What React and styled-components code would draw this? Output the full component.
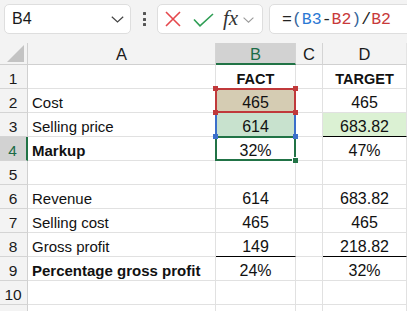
import React from 'react';
import styled, { createGlobalStyle } from 'styled-components';

const GlobalStyle = createGlobalStyle`
  html, body {
    margin: 0;
    padding: 0;
    overflow: hidden;
    background: #f3f3f3;
  }
  * { box-sizing: border-box; }
`;

const GRID = '#e1e1e1';
const GREEN = '#217346';

const rows = [
  { n: 1, a: '', b: 'FACT', d: 'TARGET', head: true },
  { n: 2, a: 'Cost', b: '465', d: '465', bBg: '#d5ccb3', range: 'red' },
  { n: 3, a: 'Selling price', b: '614', d: '683.82', bBg: '#c8e2ce', dBg: '#dbf1d3', dLine: true, range: 'blue' },
  { n: 4, a: 'Markup', b: '32%', d: '47%', boldA: true, range: 'green' },
  { n: 5, a: '', b: '', d: '' },
  { n: 6, a: 'Revenue', b: '614', d: '683.82' },
  { n: 7, a: 'Selling cost', b: '465', d: '465' },
  { n: 8, a: 'Gross profit', b: '149', d: '218.82', bLine: true, dLine: true },
  { n: 9, a: 'Percentage gross profit', b: '24%', d: '32%', boldA: true },
  { n: 10, a: '', b: '', d: '' },
  { n: '', a: '', b: '', d: '' },
];

const App = () => {
  return (
    <>
      <GlobalStyle />
      <Window>
        <Toolbar>
          <NameBox>
            <span>B4</span>
            <svg width="13" height="7" viewBox="0 0 13 7">
              <path d="M0.8 0.8 L6.5 6 L12.2 0.8" fill="none" stroke="#444" strokeWidth="1.2" />
            </svg>
          </NameBox>
          <Dots>
            <i /><i /><i />
          </Dots>
          <FuncBox>
            <svg width="16" height="16" viewBox="0 0 16 16">
              <path d="M1 1 L15 15 M15 1 L1 15" stroke="#e5484d" strokeWidth="1.6" />
            </svg>
            <svg width="21" height="14" viewBox="0 0 21 14">
              <path d="M1 6.5 L7 12.8 L20 1" fill="none" stroke="#2f9e55" strokeWidth="1.6" />
            </svg>
            <Fx>fx</Fx>
            <svg width="11" height="6" viewBox="0 0 11 6">
              <path d="M0.6 0.6 L5.5 5.2 L10.4 0.6" fill="none" stroke="#9a9a9a" strokeWidth="1.1" />
            </svg>
          </FuncBox>
          <FormulaBox>
            <Ref $c="#222">=</Ref>
            <Ref $c="#35659a">(</Ref>
            <Ref $c="#2b78d4">B3</Ref>
            <Ref $c="#222">-</Ref>
            <Ref $c="#c83a3a">B2</Ref>
            <Ref $c="#35659a">)</Ref>
            <Ref $c="#222">/</Ref>
            <Ref $c="#c83a3a">B2</Ref>
          </FormulaBox>
        </Toolbar>

        <Sheet>
          <Corner>
            <svg width="18" height="17" viewBox="0 0 18 17">
              <polygon points="17,0 17,17 0,17" fill="#c3c3c3" />
            </svg>
          </Corner>
          <ColHead>A</ColHead>
          <ColHead $active>B</ColHead>
          <ColHead>C</ColHead>
          <ColHead $end>D</ColHead>

          {rows.map((r, i) => (
            <React.Fragment key={i}>
              <RowHead $active={r.n === 4}>{r.n}</RowHead>
              <Cell $bold={r.boldA}>{r.a}</Cell>
              <Cell $center $bold={r.head} $bg={r.bBg} $line={r.bLine} $rel={!!r.range}>
                {r.b}
                {r.range === 'red' && (
                  <>
                    <Range $color="#c0393b" />
                    <Knob $color="#c0393b" $top $left />
                    <Knob $color="#c0393b" $top />
                    <Knob $color="#c0393b" $left />
                    <Knob $color="#c0393b" />
                  </>
                )}
                {r.range === 'blue' && (
                  <>
                    <Range $color="#3b6fcb" $sides />
                    <Knob $color="#3b6fcb" $left />
                    <Knob $color="#3b6fcb" />
                  </>
                )}
                {r.range === 'green' && (
                  <>
                    <Selection />
                    <FillHandle />
                  </>
                )}
              </Cell>
              <Cell />
              <Cell $center $bold={r.head} $bg={r.dBg} $line={r.dLine} $end>{r.d}</Cell>
            </React.Fragment>
          ))}
        </Sheet>
      </Window>
    </>
  );
};

export default App;

const Window = styled.div`
  width: 407px;
  height: 311px;
  overflow: hidden;
  background: #f3f3f3;
  font-family: "Liberation Sans", Arial, sans-serif;
  color: #111;
`;

const Toolbar = styled.div`
  height: 43px;
  display: flex;
  align-items: flex-start;
  padding: 4px 0 0 4px;
`;

const Box = styled.div`
  height: 30px;
  background: #fff;
  border: 1px solid #dedede;
  border-radius: 5px;
  display: flex;
  align-items: center;
`;

const NameBox = styled(Box)`
  width: 127px;
  justify-content: space-between;
  padding: 0 6px 0 7px;
  font-size: 16px;
  color: #1a1a1a;
`;

const Dots = styled.div`
  width: 26px;
  height: 30px;
  display: flex;
  flex-direction: column;
  align-items: center;
  justify-content: center;
  gap: 2.5px;

  i {
    display: block;
    width: 3px;
    height: 3px;
    background: #555;
    border-radius: 0.5px;
  }
`;

const FuncBox = styled(Box)`
  width: 106px;
  padding: 0 0 0 7px;

  svg:nth-child(1) { margin-right: 12px; }
  svg:nth-child(2) { margin-right: 9px; margin-top: 1px; }
  svg:nth-child(4) { margin-left: 5px; margin-top: 2px; }
`;

const Fx = styled.span`
  font-family: "Liberation Serif", "Times New Roman", serif;
  font-style: italic;
  font-size: 21px;
  color: #333;
  line-height: 1;
  margin-top: -2px;
`;

const FormulaBox = styled(Box)`
  flex: 1;
  margin-left: 6px;
  margin-right: -10px;
  padding-left: 12px;
  font-family: "Liberation Mono", "Courier New", monospace;
  font-size: 16.5px;
`;

const Ref = styled.span`
  color: ${(p) => p.$c};
`;

const Sheet = styled.div`
  display: grid;
  grid-template-columns: 28px 188px 80px 27px 84px;
  grid-template-rows: 22px repeat(11, 24px);
`;

const Corner = styled.div`
  border-right: 1px solid #d0d0d0;
  border-bottom: 1px solid #d0d0d0;
  display: flex;
  align-items: flex-end;
  justify-content: flex-end;
  padding: 0 2px 2px 0;
`;

const ColHead = styled.div`
  display: flex;
  align-items: flex-end;
  justify-content: center;
  font-size: 16.5px;
  line-height: 18px;
  color: ${(p) => (p.$active ? '#1b6b47' : '#1a1a1a')};
  background: ${(p) => (p.$active ? '#d2d2d2' : '#f3f3f3')};
  border-right: 1px solid ${(p) => (p.$end ? '#e4e4e4' : '#d4d4d4')};
  border-bottom: ${(p) => (p.$active ? `2px solid ${GREEN}` : '1px solid #d0d0d0')};
  padding-bottom: ${(p) => (p.$active ? '0' : '1px')};
`;

const RowHead = styled.div`
  display: flex;
  align-items: flex-end;
  justify-content: center;
  padding: 0 1px 0 0;
  font-size: 15.5px;
  line-height: 18px;
  color: ${(p) => (p.$active ? '#1b6b47' : '#1a1a1a')};
  background: ${(p) => (p.$active ? '#d2d2d2' : '#f3f3f3')};
  border-bottom: 1px solid #d4d4d4;
  border-right: ${(p) => (p.$active ? `2px solid ${GREEN}` : '1px solid #d0d0d0')};
`;

const Cell = styled.div`
  position: ${(p) => (p.$rel ? 'relative' : 'static')};
  display: flex;
  align-items: flex-end;
  justify-content: ${(p) => (p.$center ? 'center' : 'flex-start')};
  padding: 0 0 0 ${(p) => (p.$center ? '0' : '4px')};
  font-size: ${(p) => (p.$center && !p.$bold ? '16px' : p.$bold && p.$center ? '14.5px' : '15px')};
  font-weight: ${(p) => (p.$bold ? 700 : 400)};
  line-height: 18px;
  white-space: nowrap;
  background: ${(p) => p.$bg || '#fff'};
  border-right: 1px solid ${GRID};
  border-bottom: 1px solid ${(p) => (p.$line ? '#000' : GRID)};
`;

const Range = styled.span`
  position: absolute;
  top: -1px;
  left: -1px;
  right: -1px;
  bottom: -1px;
  z-index: 2;
  border: 2px solid ${(p) => p.$color};
  ${(p) => p.$sides && 'border-top: none; border-bottom: none;'}
`;

const Knob = styled.span`
  position: absolute;
  z-index: 4;
  width: 5px;
  height: 5px;
  background: ${(p) => p.$color};
  ${(p) => (p.$top ? 'top: -3px;' : 'bottom: -3px;')}
  ${(p) => (p.$left ? 'left: -3px;' : 'right: -3px;')}
`;

const Selection = styled.span`
  position: absolute;
  top: -1px;
  left: -1px;
  right: -1px;
  bottom: -1px;
  z-index: 3;
  border: 2px solid ${GREEN};
`;

const FillHandle = styled.span`
  position: absolute;
  z-index: 5;
  right: -3px;
  bottom: -3px;
  width: 6px;
  height: 6px;
  background: ${GREEN};
  border: 1px solid #fff;
  border-right: none;
  border-bottom: none;
`;
